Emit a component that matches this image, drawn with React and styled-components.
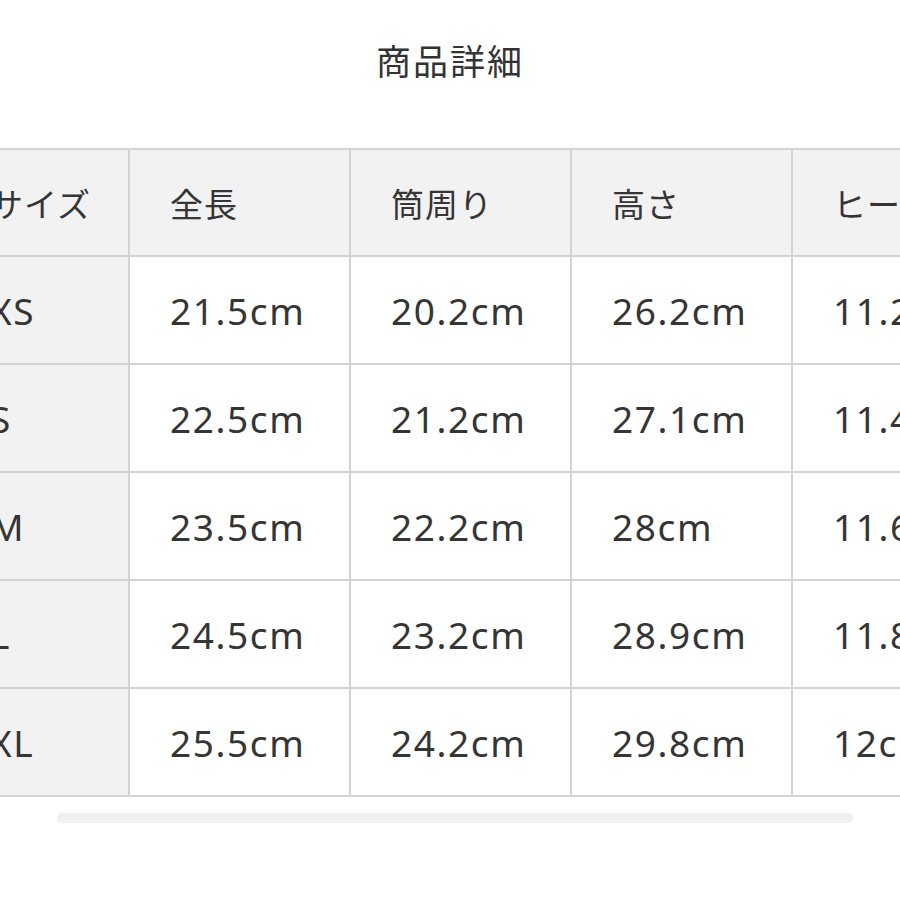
import React from "react";
import styled, { createGlobalStyle } from "styled-components";

const GlobalStyle = createGlobalStyle`
  html, body {
    margin: 0;
    padding: 0;
    background: #fff;
    overflow: hidden;
  }
  body {
    font-family: "Noto Sans", "Noto Sans CJK JP", sans-serif;
    color: #333;
  }
`;

const headers = ["サイズ", "全長", "筒周り", "高さ", "ヒール高"];

const rows = [
  ["XS", "21.5cm", "20.2cm", "26.2cm", "11.2cm"],
  ["S", "22.5cm", "21.2cm", "27.1cm", "11.4cm"],
  ["M", "23.5cm", "22.2cm", "28cm", "11.6cm"],
  ["L", "24.5cm", "23.2cm", "28.9cm", "11.8cm"],
  ["XL", "25.5cm", "24.2cm", "29.8cm", "12cm"],
];

// first column is narrower, the rest share one width
const widths = [180, 221, 221, 221, 221];

const Page = styled.div`
  width: 900px;
  height: 900px;
  overflow: hidden;
  display: flex;
  flex-direction: column;
`;

const Title = styled.h2`
  margin: 42px 0 0;
  height: 36px;
  line-height: 36px;
  font-size: 35px;
  font-weight: 400;
  text-align: center;
  letter-spacing: 2px;
  font-family: "Noto Sans CJK JP", sans-serif;
  color: #333;
`;

const Scroller = styled.div`
  margin-top: 70px;
  margin-left: -52px;
  width: 1080px;
`;

const Table = styled.table`
  border-collapse: collapse;
  table-layout: fixed;
  width: 1064px;
`;

const Col = styled.col`
  width: ${(p) => p.$w}px;
`;

const Cell = styled.td`
  border: 2px solid #d3d3d3;
  height: 106px;
  padding: 0 0 0 40px;
  font-size: 37px;
  font-weight: 400;
  letter-spacing: 1.6px;
  text-align: left;
  white-space: nowrap;
  overflow: hidden;
  background: ${(p) => (p.$head ? "#f2f2f2" : "#fff")};
  color: #353535;
`;

const HeadCell = styled(Cell).attrs({ as: "th" })`
  height: 105px;
  font-family: "Noto Sans CJK JP", sans-serif;
  font-size: 33px;
  letter-spacing: 1px;
`;

const Track = styled.div`
  margin: 16px 0 0 57px;
  width: 796px;
  height: 10px;
  border-radius: 5px;
  background: #efefef;
`;

export default function App() {
  return (
    <>
      <GlobalStyle />
      <Page>
        <Title>商品詳細</Title>
        <Scroller>
          <Table>
            <colgroup>
              {widths.map((w, i) => (
                <Col key={i} $w={w} />
              ))}
            </colgroup>
            <thead>
              <tr>
                {headers.map((h) => (
                  <HeadCell key={h} $head>
                    {h}
                  </HeadCell>
                ))}
              </tr>
            </thead>
            <tbody>
              {rows.map((r) => (
                <tr key={r[0]}>
                  {r.map((v, i) => (
                    <Cell key={i} $head={i === 0}>
                      {v}
                    </Cell>
                  ))}
                </tr>
              ))}
            </tbody>
          </Table>
        </Scroller>
        <Track />
      </Page>
    </>
  );
}
